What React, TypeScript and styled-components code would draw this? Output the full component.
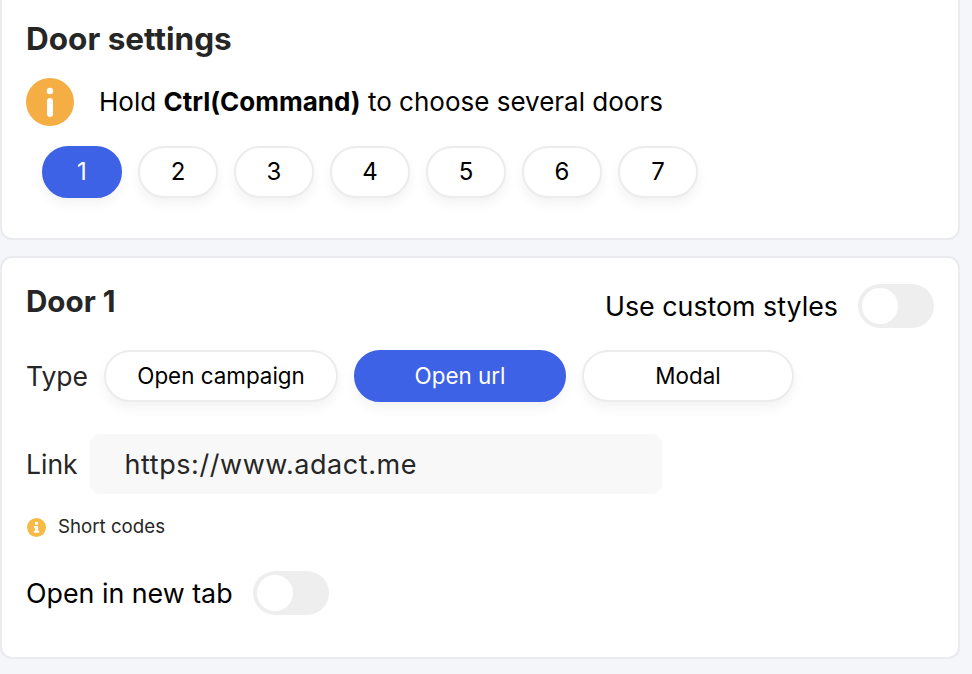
import styled, { createGlobalStyle } from "styled-components";

const GlobalStyle = createGlobalStyle`
    *{
        box-sizing:border-box;
    }
    body{
        margin:0;
        background-color:#f4f6fa;
        font-family:Inter, "Liberation Sans", sans-serif;
        overflow:hidden;
    }
`;

const Page = styled.div`
    width:960px;
    margin-top:-11px;
    display:flex;
    flex-direction:column;
    gap:16px;
`;

const Card = styled.section<{ $height: number }>`
    height:${(p) => p.$height}px;
    background-color:#fff;
    border:2px solid #e9ebee;
    border-radius:12px;
    padding:0 24px;
    display:flex;
    flex-direction:column;
`;

const Title = styled.h2`
    margin:28px 0 0;
    font-size:31.5px;
    line-height:40px;
    font-weight:700;
    color:#262626;
`;

const Hint = styled.div`
    margin-top:19px;
    display:flex;
    align-items:center;
    gap:25px;
    font-size:26px;
    line-height:48px;
    color:#000;

    b{
        font-weight:700;
    }
`;

const Doors = styled.div`
    margin:20px 0 0 16px;
    display:flex;
    gap:16px;
`;

const Pill = styled.button<{ $active?: boolean; $width: number; $size: number }>`
    width:${(p) => p.$width}px;
    height:52px;
    padding:0 0 2px;
    border-radius:26px;
    border:2px solid ${(p) => (p.$active ? "#3e62e6" : "#ececec")};
    background-color:${(p) => (p.$active ? "#3e62e6" : "#fff")};
    color:${(p) => (p.$active ? "#fff" : "#000")};
    box-shadow:0 6px 12px rgba(0,0,0,.05);
    font-family:inherit;
    font-size:${(p) => p.$size}px;
    text-align:center;
`;

const HeadRow = styled.div`
    display:flex;
    justify-content:space-between;
    align-items:flex-start;
`;

const SubTitle = styled.h3`
    margin:26px 0 0;
    font-size:29.6px;
    line-height:34px;
    font-weight:700;
    color:#262626;
`;

const ToggleRow = styled.label<{ $mt: number }>`
    margin-top:${(p) => p.$mt}px;
    display:flex;
    align-items:center;
    gap:20px;
    font-size:26.8px;
    color:#000;
`;

const Toggle = styled.span`
    width:76px;
    height:44px;
    border-radius:22px;
    background-color:#eeeeee;
    padding:4px;
    display:flex;
`;

const Knob = styled.span`
    width:36px;
    height:36px;
    border-radius:50%;
    background-color:#fff;
`;

const TypeRow = styled.div`
    margin-top:22px;
    display:flex;
    align-items:center;
    gap:16px;
`;

const Label = styled.span`
    font-size:26.5px;
    color:#262626;
`;

const LinkRow = styled.div`
    margin-top:32px;
    display:flex;
    align-items:center;
    gap:12px;
`;

const LinkInput = styled.div`
    width:572px;
    height:60px;
    border-radius:10px;
    background-color:#f8f8f9;
    padding-left:35px;
    display:flex;
    align-items:center;
    font-size:27px;
    letter-spacing:.55px;
    color:#262626;
`;

const ShortCodes = styled.div`
    margin:21px 0 0 1px;
    display:flex;
    align-items:center;
    gap:12px;
    font-size:18.7px;
    line-height:24px;
    color:#262626;
`;

const InfoIcon = ({ size, color }: { size: number; color: string }) => (
    <svg width={size} height={size} viewBox="0 0 48 48">
        <circle cx="24" cy="24" r="24" fill={color} />
        <circle cx="24" cy="13" r="3.2" fill="#fff" />
        <rect x="21" y="20" width="6" height="19" rx="3" fill="#fff" />
    </svg>
);

const SmallInfoIcon = () => (
    <svg width={19} height={19} viewBox="0 0 20 20">
        <circle cx="10" cy="10" r="10" fill="#f6bb47" />
        <rect x="8.4" y="4.2" width="3.2" height="2.8" rx=".6" fill="#fff" />
        <path d="M7.4 8.4h4.2v5h1.2v2.2H7.2v-2.2h1.2v-2.8h-1z" fill="#fff" />
    </svg>
);

const SwitchOff = () => (
    <Toggle>
        <Knob />
    </Toggle>
);

export default function App() {
    return (
        <Page>
            <GlobalStyle />
            <Card $height={251}>
                <Title>Door settings</Title>
                <Hint>
                    <InfoIcon size={48} color="#f4ae44" />
                    <span>
                        Hold <b>Ctrl(Command)</b> to choose several doors
                    </span>
                </Hint>
                <Doors>
                    {[1, 2, 3, 4, 5, 6, 7].map((n) => (
                        <Pill key={n} $width={80} $size={24} $active={n === 1}>
                            {n}
                        </Pill>
                    ))}
                </Doors>
            </Card>
            <Card $height={403}>
                <HeadRow>
                    <SubTitle>Door 1</SubTitle>
                    <ToggleRow $mt={26}>
                        Use custom styles
                        <SwitchOff />
                    </ToggleRow>
                </HeadRow>
                <TypeRow>
                    <Label>Type</Label>
                    <Pill $width={234} $size={22.4}>Open campaign</Pill>
                    <Pill $width={212} $size={22.4} $active>
                        Open url
                    </Pill>
                    <Pill $width={212} $size={22.4}>Modal</Pill>
                </TypeRow>
                <LinkRow>
                    <Label>Link</Label>
                    <LinkInput>https://www.adact.me</LinkInput>
                </LinkRow>
                <ShortCodes>
                    <SmallInfoIcon />
                    Short codes
                </ShortCodes>
                <ToggleRow $mt={32}>
                    Open in new tab
                    <SwitchOff />
                </ToggleRow>
            </Card>
        </Page>
    );
}
